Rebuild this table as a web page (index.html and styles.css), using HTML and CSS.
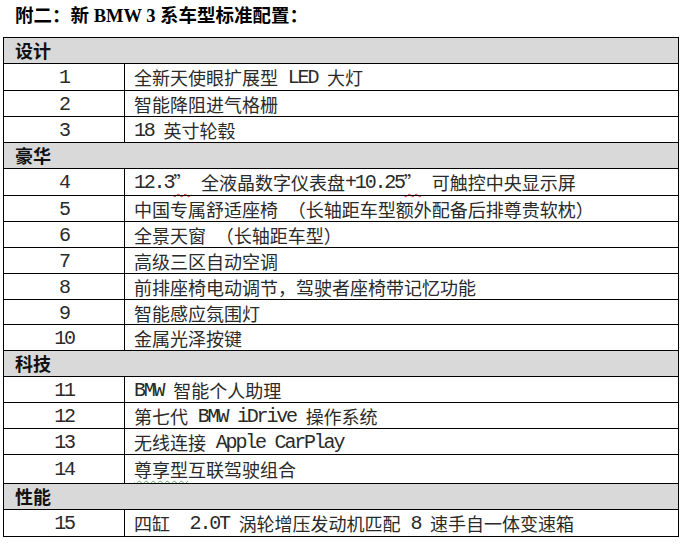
FILE: index.html
```html
<!DOCTYPE html>
<html lang="zh-CN">
<head>
<meta charset="utf-8">
<title>新 BMW 3 系车型标准配置</title>
<link rel="stylesheet" href="styles.css">
</head>
<body>
<div class="page">
  <h1 class="title">附二：新<span class="en-b"> BMW 3 </span>系车型标准配置：</h1>
  <div class="spec">
    <div class="group">设计</div>
    <div class="row tall"><div class="num en">1</div><div class="item">全新天使眼扩展型<span class="en"> LED </span>大灯</div></div>
    <div class="row"><div class="num en">2</div><div class="item">智能降阻进气格栅</div></div>
    <div class="row"><div class="num en">3</div><div class="item"><span class="en">18 </span>英寸轮毂</div></div>

    <div class="group">豪华</div>
    <div class="row tall"><div class="num en">4</div><div class="item"><span class="en">12.3</span><span class="spell">”</span><span class="en"> </span>全液晶数字仪表盘<span class="en">+10.25</span><span class="spell">”</span><span class="en"> </span>可触控中央显示屏</div></div>
    <div class="row"><div class="num en">5</div><div class="item">中国专属舒适座椅<span class="en"> </span>（长轴距车型额外配备后排尊贵软枕）</div></div>
    <div class="row"><div class="num en">6</div><div class="item">全景天窗<span class="en"> </span>（长轴距车型）</div></div>
    <div class="row"><div class="num en">7</div><div class="item">高级三区自动空调</div></div>
    <div class="row"><div class="num en">8</div><div class="item">前排座椅电动调节，驾驶者座椅带记忆功能</div></div>
    <div class="row short"><div class="num en">9</div><div class="item">智能感应氛围灯</div></div>
    <div class="row"><div class="num en">10</div><div class="item">金属光泽按键</div></div>

    <div class="group">科技</div>
    <div class="row"><div class="num en">11</div><div class="item"><span class="en">BMW </span>智能个人助理</div></div>
    <div class="row"><div class="num en">12</div><div class="item">第七代<span class="en"> BMW iDrive </span>操作系统</div></div>
    <div class="row"><div class="num en">13</div><div class="item">无线连接<span class="en"> Apple CarPlay</span></div></div>
    <div class="row xtall"><div class="num en">14</div><div class="item"><span class="grammar">尊享型</span>互联驾驶组合</div></div>

    <div class="group">性能</div>
    <div class="row tall"><div class="num en">15</div><div class="item">四缸<span class="en">  2.0T </span>涡轮增压发动机匹配<span class="en"> 8 </span>速手自一体变速箱</div></div>
  </div>
</div>
</body>
</html>
```

FILE: styles.css
```css
html, body {
  margin: 0;
  padding: 0;
  background: #ffffff;
}

body {
  font-family: "Noto Sans CJK SC", sans-serif;
  color: #1a1a1a;
}

.page {
  width: 676px;
  padding: 2px 0 0 3px;
}

.title {
  margin: 0 0 11px 12px;
  font-size: 18.5px;
  line-height: 24px;
  height: 24px;
  font-weight: 700;
  color: #000;
  white-space: pre;
}

.en-b {
  font-family: "Liberation Serif", serif;
  font-weight: 700;
  white-space: pre;
}

.spec {
  border: 1px solid #000;
  display: flex;
  flex-direction: column;
}

.spec > * + * {
  border-top: 1px solid #000;
}

.group {
  height: 25px;
  line-height: 25px;
  background: #d9d9d9;
  font-size: 18px;
  font-weight: 700;
  color: #111;
  padding-left: 11px;
}

.row {
  height: 25px;
  display: grid;
  grid-template-columns: 121px 1fr;
}

.row.tall { height: 26px; }
.row.short { height: 24px; }
.row.xtall { height: 28px; }

.num {
  border-right: 1px solid #000;
  display: flex;
  align-items: center;
  justify-content: center;
}

.item {
  display: flex;
  align-items: center;
  padding-left: 9px;
  font-size: 18px;
  white-space: pre;
  color: #2a2a2a;
}

.en {
  font-family: "Liberation Mono", monospace;
  font-size: 20px;
  letter-spacing: -2.2px;
  white-space: pre;
  color: #2a2a2a;
}

.spell {
  text-decoration: underline wavy #e0302a;
  text-decoration-thickness: 1px;
  text-underline-offset: 3px;
}

.grammar {
  text-decoration: underline wavy #5aa95a;
  text-decoration-thickness: 1px;
  text-underline-offset: 3px;
}
```
